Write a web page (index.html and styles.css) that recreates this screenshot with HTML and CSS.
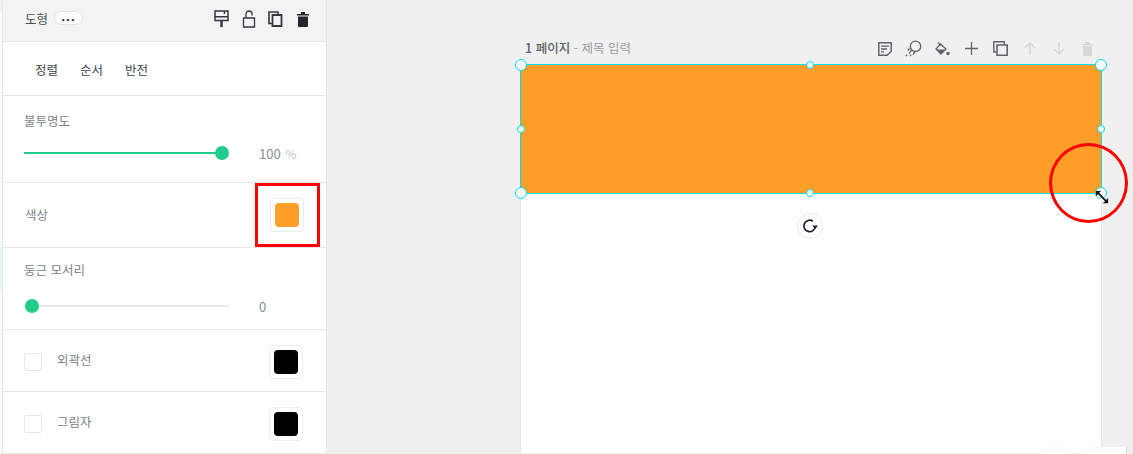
FILE: index.html
```html
<!DOCTYPE html>
<html lang="ko">
<head>
  <meta charset="UTF-8">
  <title>도형</title>
  <link rel="stylesheet" href="styles.css">
</head>
<body>
  <div class="app">
    <div class="rail"><div class="rail-tint"></div></div>

    <aside class="panel">
      <header class="panel-head">
        <div class="head-title">
          <span>도형</span>
          <span class="more">...</span>
        </div>
        <div class="head-icons">
          <svg width="15" height="18" viewBox="0 0 15 18"><path d="M1 1h13v9.500H1zM1 6.800h13M10.500 1v3" fill="none" stroke="#33373f" stroke-width="1.500"/><path d="M6.300 10.500h2.400v6.500H6.300z" fill="#33373f"/></svg>
          <svg width="14" height="18" viewBox="0 0 14 18"><path d="M1.500 8h11v9h-11zM4 8V4a3 3 0 0 1 6 0v1.500" fill="none" stroke="#33373f" stroke-width="1.300"/></svg>
          <svg width="15" height="16" viewBox="0 0 15 16"><path d="M4 12.500H1V1h9v2" fill="none" stroke="#33373f" stroke-width="1.600"/><path d="M4.500 4h9v11h-9z" fill="none" stroke="#33373f" stroke-width="1.800"/></svg>
          <svg width="12" height="15" viewBox="0 0 12 15"><path d="M0 2h12v1.500H0zM4 0h4v2H4zM1 4.500h10V14a1 1 0 0 1-1 1H2a1 1 0 0 1-1-1z" fill="#23262d"/></svg>
        </div>
      </header>

      <nav class="tabs">
        <span>정렬</span>
        <span>순서</span>
        <span>반전</span>
      </nav>

      <section class="block block-opacity">
        <div class="label">불투명도</div>
        <div class="slider-row">
          <div class="slider slider-full"><span class="knob knob-end"></span></div>
          <span class="value">100</span>
          <span class="unit">%</span>
        </div>
      </section>

      <section class="block row row-color">
        <div class="label">색상</div>
        <div class="swatch"><span class="chip chip-orange"></span></div>
      </section>

      <section class="block block-radius">
        <div class="label">둥근 모서리</div>
        <div class="slider-row">
          <div class="slider slider-empty"><span class="knob knob-start"></span></div>
          <span class="value">0</span>
        </div>
      </section>

      <section class="block row row-check">
        <div class="check-wrap">
          <span class="check"></span>
          <span class="label">외곽선</span>
        </div>
        <div class="swatch"><span class="chip chip-black"></span></div>
      </section>

      <section class="block row row-check">
        <div class="check-wrap">
          <span class="check"></span>
          <span class="label">그림자</span>
        </div>
        <div class="swatch"><span class="chip chip-black"></span></div>
      </section>
    </aside>

    <main class="stage">
      <div class="page-wrap">
        <div class="page-bar">
          <div class="page-title"><b>1 페이지</b> - <span>제목 입력</span></div>
          <div class="page-icons">
            <svg width="14" height="14" viewBox="0 0 14 14"><path d="M.8.8h12.400v8.400L9.200 13.200H.8z" fill="none" stroke="#5f6470" stroke-width="1.500"/><path d="M3 4.200h8M3 7h6M3 9.800h3" stroke="#5f6470" stroke-width="1.300"/></svg>
            <svg width="17" height="17" viewBox="0 0 17 17"><circle cx="10.500" cy="6.300" r="5.200" fill="none" stroke="#5f6470" stroke-width="1.400"/><path d="M6.800 10l-2.800 3.400M9.800 12l-1.800 2.500M4.500 8.500L2.800 10.500M.8 16l1.300-1.300M5 16l1.200-1.300" stroke="#5f6470" stroke-width="1.300"/></svg>
            <svg width="15" height="14" viewBox="0 0 15 14"><path d="M5.500 2L1 7l5 5 5-5z" fill="none" stroke="#5f6470" stroke-width="1.300"/><path d="M1 7.500h10L6 12z" fill="#5f6470"/><path d="M3 .5l3 3" stroke="#5f6470" stroke-width="1.300"/><circle cx="13" cy="11.500" r="1.800" fill="#5f6470"/></svg>
            <svg width="13" height="13" viewBox="0 0 13 13"><path d="M6.500 0v13M0 6.500h13" stroke="#5f6470" stroke-width="1.300"/></svg>
            <svg width="15" height="15" viewBox="0 0 15 15"><path d="M3.500 11H.8V.8h10.400v2.700" fill="none" stroke="#5f6470" stroke-width="1.400"/><path d="M4 4h10.200v10.200H4z" fill="none" stroke="#5f6470" stroke-width="1.600"/></svg>
            <svg width="12" height="13" viewBox="0 0 12 13"><path d="M6 13V1M1 6l5-5 5 5" fill="none" stroke="#d8d8da" stroke-width="1.600"/></svg>
            <svg width="12" height="13" viewBox="0 0 12 13"><path d="M6 0v12M1 7l5 5 5-5" fill="none" stroke="#d8d8da" stroke-width="1.600"/></svg>
            <svg width="11" height="14" viewBox="0 0 11 14"><path d="M0 2h11v1.300H0zM3.500 0h4v2h-4zM1 4h9v9a1 1 0 0 1-1 1H2a1 1 0 0 1-1-1z" fill="#d8d8da"/></svg>
          </div>
        </div>

        <div class="page">
          <div class="shape">
            <span class="handle big tl"></span>
            <span class="handle big tr"></span>
            <span class="handle big bl"></span>
            <span class="handle big br"></span>
            <span class="handle tm"></span>
            <span class="handle bm"></span>
            <span class="handle ml"></span>
            <span class="handle mr"></span>
            <span class="rotate">
              <svg width="16" height="16" viewBox="0 0 16 16"><path d="M13.300 8.500A5.700 5.700 0 1 1 10.800 3.200" fill="none" stroke="#1d2026" stroke-width="1.700"/><path d="M10.300 7.500h5.700L13.200 11z" fill="#1d2026"/></svg>
            </span>
          </div>
        </div>
      </div>

      <div class="float-btns">
        <span class="float-round"></span>
        <span class="float-box"></span>
      </div>
    </main>
  </div>

  <div class="mark-box"></div>
  <div class="mark-circle"></div>
  <svg class="cursor" width="14" height="14" viewBox="0 0 16 16"><path d="M2 2l12 12" stroke="#fff" stroke-width="4"/><path d="M3 3l10 10" stroke="#111" stroke-width="2"/><path d="M1 1h6L1 7zM15 15H9l6-6z" fill="#111"/></svg>
</body>
</html>
```

FILE: styles.css
```css
* {
  box-sizing: border-box;
}
html, body {
  margin: 0;
  height: 100%;
  overflow: hidden;
}
body {
  background: #f0f0f0;
  color: #6b6f76;
  font-family: "Noto Sans CJK KR", "Noto Sans", sans-serif;
  font-size: 12.5px;
}
.app {
  display: flex;
  height: 454px;
}

/* left edge */
.rail {
  width: 2px;
  padding-top: 245px;
  background: linear-gradient(#f3f3f3 13px, #fafafa 13px);
}
.rail-tint {
  height: 45px;
  background: #e8f8f4;
}

/* panel */
.panel {
  width: 325px;
  height: 454px;
  background: #fff;
  border-left: 1px solid #e6e6e6;
  border-right: 1px solid #e6e6e6;
  border-bottom: 1px solid #e6e6e6;
  display: flex;
  flex-direction: column;
  flex-shrink: 0;
}
.panel-head {
  flex: none;
  height: 42px;
  background: #f3f3f3;
  border-bottom: 1px solid #e4e4e4;
  display: flex;
  align-items: center;
  justify-content: space-between;
  padding: 0 10px 3px 22px;
}
.head-title {
  display: flex;
  align-items: center;
  gap: 6px;
  margin-top: -2px;
  color: #4a4e55;
}
.more {
  width: 29px;
  height: 14px;
  border: 1px solid #e2e2e2;
  border-radius: 8px;
  background: #fbfbfb;
  color: #33373f;
  font-size: 12px;
  font-weight: 700;
  line-height: 7px;
  text-align: center;
  letter-spacing: 1px;
}
.head-icons {
  display: grid;
  grid-auto-flow: column;
  grid-auto-columns: 27px;
  justify-items: center;
  align-items: center;
}
.tabs {
  flex: none;
  height: 54px;
  border-bottom: 1px solid #e6e6e6;
  display: flex;
  align-items: center;
  gap: 22px;
  padding: 2px 0 0 32px;
  color: #3f434a;
}
.block {
  flex: none;
  border-bottom: 1px solid #e6e6e6;
}
.block:last-child {
  border-bottom: 0;
}
.label {
  color: #7b7f86;
  line-height: 18px;
}
.block-opacity {
  height: 87px;
  padding: 16px 0 0 21px;
}
.block-radius {
  height: 82px;
  padding: 13px 0 0 21px;
}
.slider-row {
  display: flex;
  align-items: center;
  height: 16px;
  margin-top: 15px;
}
.block-radius .slider-row {
  margin-top: 19px;
}
.slider {
  position: relative;
  width: 205px;
  height: 2px;
  background: #e8e8e8;
}
.slider-full {
  width: 198px;
  background: #20cb8c;
}
.knob {
  position: absolute;
  top: -6px;
  width: 14px;
  height: 14px;
  border-radius: 50%;
  background: #20cb8c;
}
.knob-end {
  right: -7px;
}
.knob-start {
  left: 1px;
}
.value {
  margin-left: 37px;
  margin-top: 1px;
  color: #8a8d92;
  font-size: 13px;
}
.slider-empty + .value {
  margin-left: 30px;
}
.unit {
  margin-left: 5px;
  margin-top: 1px;
  color: #c4c6c9;
  font-size: 11.5px;
}
.row {
  display: flex;
  align-items: center;
  justify-content: space-between;
  padding: 2px 23px 0 21px;
}
.row-color {
  height: 65px;
  padding: 0 22px 0 22px;
}
.row-check {
  height: 62px;
}
.row-check:last-child {
  height: 61px;
}
.check-wrap {
  display: flex;
  align-items: center;
  gap: 15px;
}
.check {
  width: 18px;
  height: 18px;
  border: 1px solid #e8e8e8;
  border-radius: 2px;
  background: #fff;
}
.row-check .check-wrap .label {
  margin-top: -3px;
}
.swatch {
  width: 34px;
  height: 34px;
  border: 1px solid #ececec;
  border-radius: 4px;
  background: #fff;
  display: flex;
  align-items: center;
  justify-content: center;
}
.chip {
  width: 24px;
  height: 24px;
  border-radius: 4px;
}
.chip-orange {
  background: #ff9f29;
}
.chip-black {
  background: #000;
}

/* stage */
.stage {
  flex: 1;
  position: relative;
  padding: 32px 31px 0 193px;
  background: #f0f0f0;
  overflow: hidden;
}
.page-wrap {
  width: 582px;
}
.page-bar {
  height: 33px;
  display: flex;
  align-items: center;
  justify-content: space-between;
  padding: 0 0 0 5px;
  color: #9a9da3;
}
.page-title {
  margin-top: -2px;
}
.page-title b {
  color: #5c6068;
  font-weight: 500;
}
.page-icons {
  display: grid;
  grid-auto-flow: column;
  grid-auto-columns: 29px;
  justify-items: center;
  align-items: center;
}
.page {
  height: 389px;
  background: #fff;
  border-left: 1px solid #e6e6e6;
  border-right: 1px solid #e6e6e6;
}
.shape {
  position: relative;
  height: 130px;
  margin: -1px -1px 0;
  background: #ff9f29;
  border: 1px solid #00e0ee;
}

/* selection handles */
.handle {
  position: absolute;
  width: 8px;
  height: 8px;
  border: 1.500px solid #00d8e6;
  border-radius: 50%;
  background: #fff;
}
.handle.big {
  width: 12px;
  height: 12px;
}
.tl { left: -6px; top: -6px; }
.tr { right: -6px; top: -6px; }
.bl { left: -6px; bottom: -6px; }
.br { right: -6px; bottom: -6px; }
.tm { left: 285px; top: -4px; }
.bm { left: 285px; bottom: -4px; }
.ml { left: -4px; top: 60px; }
.mr { right: -4px; top: 60px; }
.rotate {
  position: absolute;
  left: 276px;
  top: 148px;
  width: 26px;
  height: 26px;
  border: 1px solid #e8e8e8;
  border-radius: 50%;
  background: #fff;
  display: flex;
  align-items: center;
  justify-content: center;
}
.float-btns {
  position: absolute;
  left: 711px;
  top: 447px;
  display: flex;
  gap: 10px;
}
.float-round {
  width: 34px;
  height: 34px;
  border-radius: 50%;
  background: #fff;
  box-shadow: 0 0 2px #f0f0f0;
}
.float-box {
  width: 45px;
  height: 34px;
  border-radius: 10px 0 0 0;
  border-right: 1px solid #ddd;
  background: #fff;
  box-shadow: 0 0 2px #f0f0f0;
}

/* red annotations */
.mark-box {
  position: absolute;
  left: 255px;
  top: 183px;
  width: 65px;
  height: 64px;
  border: 3px solid #ff0000;
}
.mark-circle {
  position: absolute;
  left: 1049px;
  top: 143px;
  width: 79px;
  height: 80px;
  border: 3px solid #ff0000;
  border-radius: 50%;
}
.cursor {
  position: absolute;
  left: 1095px;
  top: 190px;
}
```
